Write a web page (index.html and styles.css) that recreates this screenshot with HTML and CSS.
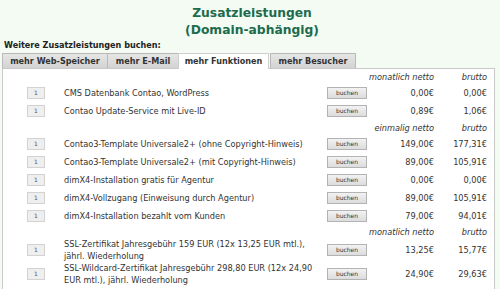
FILE: index.html
```html
<!DOCTYPE html>
<html lang="de">
<head>
<meta charset="utf-8">
<title>Zusatzleistungen</title>
<link rel="stylesheet" href="styles.css">
</head>
<body>
<h1 class="title">Zusatzleistungen<br>(Domain-abhängig)</h1>
<p class="subtitle">Weitere Zusatzleistungen buchen:</p>
<div class="tabs">
  <div class="tab t1">mehr Web-Speicher</div>
  <div class="tab t2">mehr E-Mail</div>
  <div class="tab t3 active">mehr Funktionen</div>
  <div class="tab t4">mehr Besucher</div>
</div>
<div class="panel">
  <table class="items">
    <colgroup>
      <col class="c-qty"><col class="c-desc"><col class="c-btn"><col class="c-net"><col class="c-gross">
    </colgroup>
    <tr class="head"><td></td><td></td><td></td><td class="num">monatlich netto</td><td class="num">brutto</td></tr>
    <tr class="item"><td class="qty"><span class="qbox">1</span></td><td>CMS Datenbank Contao, WordPress</td><td class="btncell"><button class="buy">buchen</button></td><td class="num">0,00€</td><td class="num">0,00€</td></tr>
    <tr class="item"><td class="qty"><span class="qbox">1</span></td><td>Contao Update-Service mit Live-ID</td><td class="btncell"><button class="buy">buchen</button></td><td class="num">0,89€</td><td class="num">1,06€</td></tr>
    <tr class="head"><td></td><td></td><td></td><td class="num">einmalig netto</td><td class="num">brutto</td></tr>
    <tr class="item"><td class="qty"><span class="qbox">1</span></td><td>Contao3-Template Universale2+ (ohne Copyright-Hinweis)</td><td class="btncell"><button class="buy">buchen</button></td><td class="num">149,00€</td><td class="num">177,31€</td></tr>
    <tr class="item"><td class="qty"><span class="qbox">1</span></td><td>Contao3-Template Universale2+ (mit Copyright-Hinweis)</td><td class="btncell"><button class="buy">buchen</button></td><td class="num">89,00€</td><td class="num">105,91€</td></tr>
    <tr class="item"><td class="qty"><span class="qbox">1</span></td><td>dimX4-Installation gratis für Agentur</td><td class="btncell"><button class="buy">buchen</button></td><td class="num">0,00€</td><td class="num">0,00€</td></tr>
    <tr class="item"><td class="qty"><span class="qbox">1</span></td><td>dimX4-Vollzugang (Einweisung durch Agentur)</td><td class="btncell"><button class="buy">buchen</button></td><td class="num">89,00€</td><td class="num">105,91€</td></tr>
    <tr class="item"><td class="qty"><span class="qbox">1</span></td><td>dimX4-Installation bezahlt vom Kunden</td><td class="btncell"><button class="buy">buchen</button></td><td class="num">79,00€</td><td class="num">94,01€</td></tr>
    <tr class="head short"><td></td><td></td><td></td><td class="num">monatlich netto</td><td class="num">brutto</td></tr>
    <tr class="item"><td class="qty"><span class="qbox">1</span></td><td>SSL-Zertifikat Jahresgebühr 159 EUR (12x 13,25 EUR mtl.), jährl. Wiederholung</td><td class="btncell"><button class="buy">buchen</button></td><td class="num">13,25€</td><td class="num">15,77€</td></tr>
    <tr class="item"><td class="qty"><span class="qbox">1</span></td><td>SSL-Wildcard-Zertifikat Jahresgebühr 298,80 EUR (12x 24,90 EUR mtl.), jährl. Wiederholung</td><td class="btncell"><button class="buy">buchen</button></td><td class="num">24,90€</td><td class="num">29,63€</td></tr>
  </table>
</div>
</body>
</html>
```

FILE: styles.css
```css
html, body {
  margin: 0;
  padding: 0;
}
body {
  background: #f3fbf3;
  font-family: "DejaVu Sans", Verdana, sans-serif;
  font-size: 8.2px;
  color: #333;
  overflow: hidden;
  height: 289px;
}
.title {
  margin: 0;
  padding: 5px 0 0 4px;
  text-align: center;
  font-size: 12.3px;
  line-height: 17px;
  font-weight: bold;
  color: #1d6b4c;
}
.subtitle {
  margin: 0 0 2px 4px;
  font-size: 8.1px;
  font-weight: bold;
  line-height: 12px;
  color: #222;
}
.tabs {
  display: flex;
  margin-left: 2px;
  height: 15px;
  position: relative;
  z-index: 1;
}
.tab {
  box-sizing: border-box;
  height: 15px;
  border: 1px solid #b9b9b9;
  border-bottom: none;
  background: linear-gradient(#e6e6e6, #d3d3d3);
  font-weight: bold;
  font-size: 8.1px;
  line-height: 14px;
  color: #333;
  text-align: center;
  white-space: nowrap;
}
.t1 { width: 106px; }
.t2 { width: 72px; margin-left: -1px; }
.t3 { width: 91px; margin-left: -1px; }
.t4 { width: 86px; margin-left: 1px; }
.tab.active {
  background: #fff;
  border-color: #cfcfcf;
  height: 16px;
}
.panel {
  margin-left: 2px;
  width: 493px;
  height: 221px;
  box-sizing: border-box;
  border: 1px solid #c9c9c9;
  border-bottom: none;
  background: #fff;
  overflow: hidden;
}
.items {
  border-collapse: collapse;
  table-layout: fixed;
  width: 484px;
}
.c-qty { width: 61px; }
.c-desc { width: 255px; }
.c-btn { width: 50px; }
.c-net { width: 65px; }
.c-gross { width: 53px; }
.items td {
  padding: 0;
  line-height: 12px;
  vertical-align: middle;
}
.items tr.item td { height: 18px; }
.items tr.head td {
  height: 15px;
  font-style: italic;
}
.items tr.head.short td { height: 13px; }
.num { text-align: right; white-space: nowrap; }
.qty { padding-left: 24px !important; }
.qbox {
  display: inline-block;
  box-sizing: border-box;
  width: 18px;
  height: 12px;
  border: 1px solid #d2d2d2;
  background: #efefef;
  font-size: 6px;
  line-height: 10px;
  text-align: center;
  color: #555;
  vertical-align: middle;
}
.btncell { padding-left: 8px !important; }
.buy {
  display: block;
  box-sizing: border-box;
  width: 40px;
  height: 12px;
  padding: 0;
  border: 1px solid #b3b3b3;
  background: linear-gradient(#f2f2f2, #dcdcdc);
  font-family: "DejaVu Sans", Verdana, sans-serif;
  font-size: 6px;
  line-height: 10px;
  color: #333;
}
```
